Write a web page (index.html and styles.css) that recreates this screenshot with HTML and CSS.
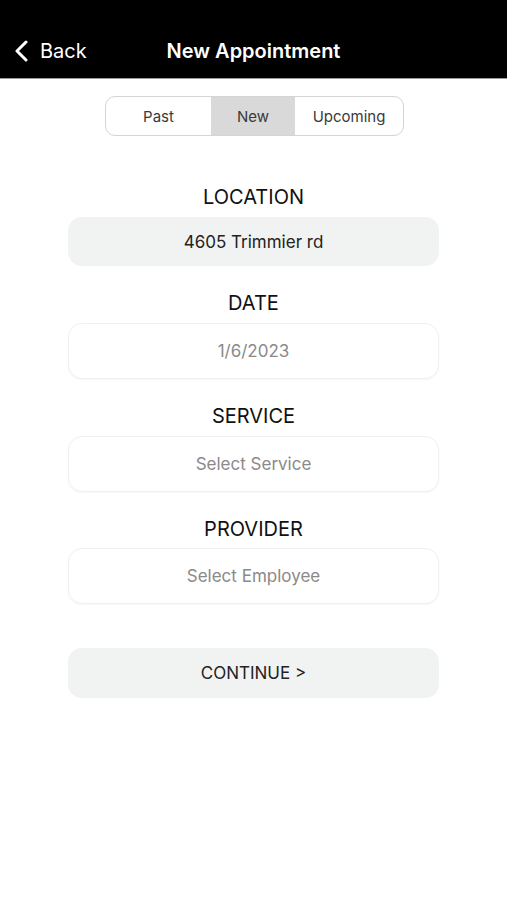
FILE: index.html
```html
<!DOCTYPE html>
<html lang="en">
<head>
  <meta charset="UTF-8">
  <meta name="viewport" content="width=device-width, initial-scale=1.0">
  <title>New Appointment</title>
  <link rel="stylesheet" href="styles.css">
</head>
<body>

<!-- Top bar -->
<header class="topbar">
  <a class="back" href="#">
    <svg width="16" height="22" viewBox="0 0 16 22" aria-hidden="true">
      <path d="M12 2 L3 11 L12 20" fill="none" stroke="#fff" stroke-width="3" stroke-linecap="round" stroke-linejoin="round"/>
    </svg>
    <span>Back</span>
  </a>
  <h1>New Appointment</h1>
</header>

<!-- Tabs -->
<div class="tabs">
  <div class="tab">Past</div>
  <div class="tab active">New</div>
  <div class="tab">Upcoming</div>
</div>

<!-- Form -->
<main class="form">
  <div class="field">
    <label>LOCATION</label>
    <div class="box filled">4605 Trimmier rd</div>
  </div>
  <div class="field">
    <label>DATE</label>
    <div class="box empty">1/6/2023</div>
  </div>
  <div class="field">
    <label>SERVICE</label>
    <div class="box empty">Select Service</div>
  </div>
  <div class="field">
    <label>PROVIDER</label>
    <div class="box empty">Select Employee</div>
  </div>

  <button class="continue">CONTINUE &gt;</button>
</main>

</body>
</html>
```

FILE: styles.css
```css
body {
  font-family: Inter, "Liberation Sans", sans-serif;
  margin: 0;
  padding: 0;
  background-color: #fff;
  color: #111;
  width: 507px;
}

.topbar {
  background-color: #000;
  height: 78px;
  border-bottom: 1px solid #9a9a9a;
  position: relative;
  display: flex;
  align-items: flex-end;
  justify-content: center;
}

.topbar h1 {
  margin: 0 0 15px;
  font-size: 20px;
  font-weight: 600;
  color: #fff;
  line-height: 24px;
}

.back {
  position: absolute;
  left: 14px;
  bottom: 15px;
  display: flex;
  align-items: center;
  gap: 10px;
  color: #fff;
  text-decoration: none;
  font-size: 20px;
  line-height: 24px;
}

.tabs {
  display: flex;
  width: 297px;
  height: 38px;
  margin: 17px auto 0;
  border: 1px solid #d4d4d4;
  border-radius: 10px;
  overflow: hidden;
  transform: translateX(1px);
}

.tab {
  display: flex;
  align-items: center;
  justify-content: center;
  font-size: 15px;
  color: #3a3a3a;
}

.tab:nth-child(1) { width: 105px; }
.tab:nth-child(2) { width: 84px; }
.tab:nth-child(3) { flex: 1; }

.tab.active {
  background-color: #d9d9d9;
}

.form {
  width: 371px;
  margin: 49px auto 0;
  display: flex;
  flex-direction: column;
}

.field {
  display: flex;
  flex-direction: column;
  align-items: center;
  margin-bottom: 25px;
}

.field label {
  font-size: 20px;
  line-height: 24px;
  margin-bottom: 8px;
  color: #111;
}

.box {
  width: 100%;
  box-sizing: border-box;
  display: flex;
  align-items: center;
  justify-content: center;
  border-radius: 14px;
  font-size: 17px;
}

.box.filled {
  height: 49px;
  background-color: #f1f2f2;
  color: #222;
}

.box.empty {
  height: 56px;
  background-color: #fff;
  border: 1px solid #f0f0f0;
  box-shadow: 0 1px 2px rgba(0, 0, 0, 0.04);
  color: #8a8a8a;
}

.field:nth-child(4) {
  margin-bottom: 44px;
}

.field:nth-child(4) label {
  margin-bottom: 7px;
}

.continue {
  height: 50px;
  border: none;
  border-radius: 14px;
  background-color: #f1f2f2;
  font-family: inherit;
  font-size: 17px;
  color: #222;
  cursor: pointer;
}
```
